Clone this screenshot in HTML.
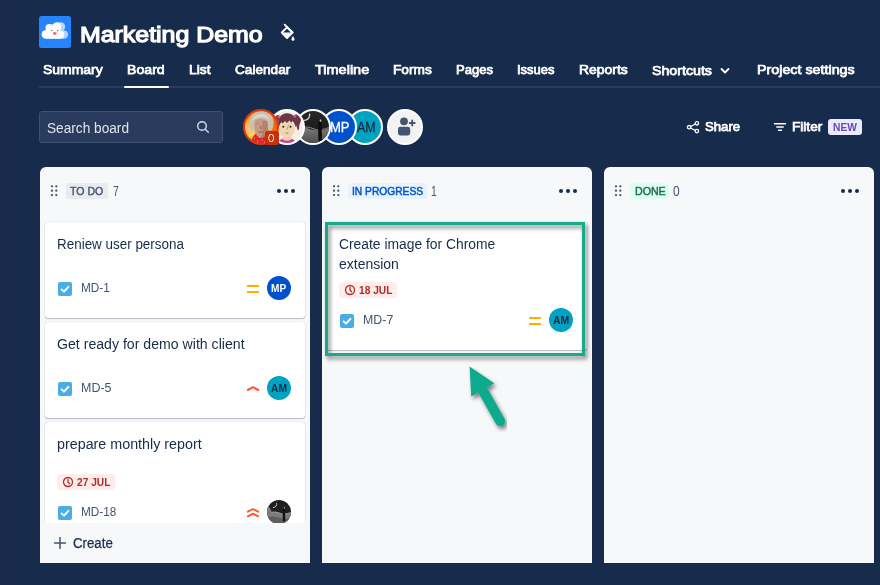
<!DOCTYPE html>
<html lang="en">
<head>
<meta charset="utf-8">
<title>Marketing Demo - Board</title>
<style>
*{box-sizing:border-box;margin:0;padding:0}
html,body{width:880px;height:585px;overflow:hidden}
body{background:#172b4d;font-family:"Liberation Sans",sans-serif;color:#fff;position:relative}
.abs{position:absolute}
.band{left:0;top:0;width:17px;height:585px;background:#182b4d;border-right:3px solid #17294c}
.logo{left:39px;top:16px;width:32px;height:32px;border-radius:2.500px;background:#2684ff;overflow:hidden}
.title{left:80px;top:19px;height:28px;line-height:28px;font-size:23px;font-weight:700;white-space:nowrap;color:#fff;overflow:hidden}
.tabs{left:39px;top:56px;width:841px;height:32px;border-bottom:2px solid #2b3b5c}
.tab{position:absolute;top:62px;height:18px;line-height:18px;font-size:14px;font-weight:700;white-space:nowrap;color:#fff}
.tabline{left:124px;top:86px;width:45px;height:2px;background:#fff;border-radius:1px}
.search{left:39px;top:111px;width:184px;height:32px;border:1px solid #40516f;border-radius:3px;background:#2a3c5e}
.search span{position:absolute;left:7px;top:6px;font-size:14px;line-height:18px;color:#d5dbe6}
.av{position:absolute;border-radius:50%;border:2px solid #fff;overflow:hidden}
.col{position:absolute;top:167px;width:270px;height:396px;background:#f7f8f9;border-radius:6px 6px 0 0}
.lbl{position:absolute;top:183px;height:16px;line-height:16px;font-size:11px;font-weight:700;border-radius:3px;padding:0 4px;white-space:nowrap}
.cnt{position:absolute;top:182px;font-size:14px;line-height:18px;color:#44546f}
.card{position:absolute;background:#fff;border-radius:3px;box-shadow:0 1px 1px rgba(9,30,66,.25),0 0 1px rgba(9,30,66,.31)}
.ct{position:absolute;font-size:14px;line-height:20px;color:#172b4d;white-space:nowrap}
.key{position:absolute;font-size:12px;line-height:16px;color:#44546f;white-space:nowrap}
.due{position:absolute;height:16px;border-radius:3px;background:#ffeceb;color:#ae2e24;font-size:11px;font-weight:700;line-height:16px;white-space:nowrap}
.tx{position:absolute;white-space:nowrap;line-height:normal;transform-origin:0 0}
.cav{position:absolute;width:24px;height:24px;border-radius:50%;font-size:10px;font-weight:700;line-height:24px;text-align:center}
</style>
</head>
<body>
<div class="abs band"></div>

<!-- project logo -->
<div class="abs logo">
<svg width="32" height="32" viewBox="0 0 32 32">
<g fill="#b8d6ff" transform="translate(3.900 0)"><circle cx="6.900" cy="18.400" r="4.300"/><circle cx="10.200" cy="11.800" r="3.700"/><circle cx="17.900" cy="10.700" r="4.400"/><circle cx="21" cy="18.600" r="4.100"/><rect x="6.900" y="13" width="14.100" height="9.700"/><circle cx="14" cy="15" r="5"/></g>
<g fill="#fff"><circle cx="6.900" cy="18.400" r="4.300"/><circle cx="10.200" cy="11.800" r="3.700"/><circle cx="17.900" cy="10.700" r="4.400"/><circle cx="21" cy="18.600" r="4.100"/><rect x="6.900" y="13" width="14.100" height="9.700"/><circle cx="14" cy="15" r="5"/></g>
<ellipse cx="12.800" cy="14.600" rx=".8" ry=".7" fill="#5a5a66"/><ellipse cx="18.700" cy="14.600" rx=".8" ry=".7" fill="#5a5a66"/>
<path d="M13.900 16.500q1.900-.6 3.800 0a1.900 2.300 0 0 1-3.800 0z" fill="#ff4d55"/>
</svg>
</div>
<svg class="abs" style="left:272px;top:16px" width="32" height="32" viewBox="272 16 32 32">
<path d="M284.700 24.700 292.500 32.500" stroke="#fff" stroke-width="1.900" stroke-linecap="round" fill="none"/>
<path d="M287 27.300 281.800 32.500 287 38 292.500 32.500z" stroke="#fff" stroke-width="1.900" stroke-linejoin="round" fill="none"/>
<path d="M281.800 32.500H292.500L287 38z" fill="#fff"/>
<path d="M293 35.900c1.200 1.700 1.500 2.600 1.500 3.400a1.500 1.500 0 0 1-3 0c0-.8.300-1.700 1.500-3.400z" fill="#fff"/>
</svg>

<!-- tabs -->
<div class="abs tabs"></div>
<svg class="abs" style="left:719px;top:65px" width="12" height="12" viewBox="0 0 12 12"><path d="M2.500 4 6 7.500 9.500 4" fill="none" stroke="#fff" stroke-width="1.800" stroke-linecap="round" stroke-linejoin="round"/></svg>
<div class="abs tabline"></div>

<!-- search -->
<div class="abs search">
<svg class="abs" style="left:155px;top:7.400px" width="16" height="16" viewBox="0 0 16 16"><circle cx="7" cy="7" r="4.300" fill="none" stroke="#d5dbe6" stroke-width="1.400"/><path d="M10.200 10.200 13.300 13.300" stroke="#d5dbe6" stroke-width="1.400" stroke-linecap="round"/></svg>
</div>

<!-- avatars -->

<!-- avatars (stacked, first on top) -->
<div class="av" style="left:347px;top:109px;width:36px;height:36px;background:#00a3bf"></div>
<div class="tx" id="bigam" style="left:356.93px;top:118.75px;font-size:14px;font-weight:400;color:#172b4d;transform:scaleX(0.8916);-webkit-text-stroke:0.3px #172b4d">AM</div>
<div class="av" style="left:321px;top:109px;width:36px;height:36px;background:#0052cc"></div>
<div class="tx" id="bigmp" style="left:330.21px;top:118.75px;font-size:14px;font-weight:400;color:#fff;transform:scaleX(0.9318);-webkit-text-stroke:0.3px #fff">MP</div>
<svg class="abs" style="left:295px;top:109px" width="36" height="36" viewBox="0 0 36 36">
<defs><clipPath id="c3"><circle cx="18" cy="18" r="16"/></clipPath>
<linearGradient id="g3" x1="0" y1="0" x2="0" y2="1"><stop offset="0" stop-color="#2b2b2b"/><stop offset=".5" stop-color="#1c1c1c"/><stop offset="1" stop-color="#333"/></linearGradient>
<linearGradient id="g3b" x1="0" y1="0" x2="0" y2="1"><stop offset="0" stop-color="#7c7c7c"/><stop offset="1" stop-color="#454545"/></linearGradient></defs>
<circle cx="18" cy="18" r="18" fill="#fff"/>
<g clip-path="url(#c3)">
<rect width="36" height="36" fill="url(#g3)"/>
<path d="M0 19c4-1.500 8-1.500 12 0s8 2.800 12 2.500 8-1.500 12-3v18H0z" fill="url(#g3b)"/>
<path d="M9 18.200c3-.6 6 .2 9 1.400s6 1.700 8 1.400" fill="none" stroke="#9a9a9a" stroke-width=".9"/>
<path d="M27 20.500c3-.6 5-1.400 8-2.600" fill="none" stroke="#8c8c8c" stroke-width=".8"/>
<path d="M14.600 5.200c.6 3-1.600 5.600-5 6.200" fill="none" stroke="#d0d0d0" stroke-width="1.400" stroke-linecap="round"/>
<path d="M23.600 11c1.200-1.200 3-.8 3.200 1 .3 3-.4 6-.2 9s.6 7 .2 11h-3.400c.2-4-.4-8-.2-11s-.2-7 .4-10z" fill="#0c0c0c"/>
<ellipse cx="25.500" cy="11.600" rx=".9" ry="1.300" fill="#bdbdbd"/>
</g></svg>
<svg class="abs" style="left:269px;top:109px" width="36" height="36" viewBox="0 0 36 36">
<defs><clipPath id="c2"><circle cx="18" cy="18" r="16"/></clipPath></defs>
<circle cx="18" cy="18" r="18" fill="#fff"/>
<g clip-path="url(#c2)">
<rect width="36" height="36" fill="#f3eee6"/>
<path d="M25.500 6c3-2 6.500 0 6.500 4 0 3-1.500 4.500-1.800 7-.3 2 .3 3.500-1.200 4.500-1-2-1.500-5-3-7.500z" fill="#6e3547"/>
<path d="M10.500 6.500c-2-1.500-4.500 0-4 2.800.3 1.500 1.500 2.500 3 2.700z" fill="#6e3547"/>
<path d="M8.500 36c.5-4.500 4-7 9.500-7s9 2.500 9.500 7z" fill="#c8409a"/>
<path d="M13.700 26h8.600v4.500q-4.300 2.500-8.600 0z" fill="#ecd0aa"/>
<ellipse cx="18" cy="19.800" rx="7.800" ry="9" fill="#f0d5b0"/>
<path d="M9.800 19c-2.500-8 1.500-14.800 8.200-14.800s11 5.500 8.500 14.300c-.5-3-1.500-5-3-6.500l-1.500 1.800-1.500-2.300-2.500 2.500-2-2-2.500 2.500-1-1.500c-1.500 1.500-2.300 3.500-2.700 6z" fill="#6e3547"/>
<ellipse cx="9.500" cy="7.700" rx="1.200" ry="1.600" fill="#e040b0"/><ellipse cx="26" cy="7.600" rx="1.100" ry="1.500" fill="#e040b0"/>
<circle cx="14.300" cy="17.700" r="1" fill="#2e2a2a"/><circle cx="21.500" cy="17.700" r="1" fill="#2e2a2a"/>
<path d="M19.900 15.800c-.8 1.500-1.500 3-1.700 4.400h1" fill="none" stroke="#a8705a" stroke-width=".5"/>
<path d="M16.100 23.300q1.900.7 3.800 0-.6 1.600-1.900 1.600t-1.900-1.600z" fill="#c47d80"/>
</g></svg>
<svg class="abs" style="left:243px;top:109px" width="36" height="36" viewBox="0 0 36 36">
<defs><clipPath id="c1"><circle cx="18" cy="18" r="16"/></clipPath>
<radialGradient id="g1" cx=".25" cy=".55" r=".85"><stop offset="0" stop-color="#ffd9a0"/><stop offset=".35" stop-color="#ff9a1f"/><stop offset=".8" stop-color="#f2600f"/><stop offset="1" stop-color="#e4480c"/></radialGradient></defs>
<circle cx="18" cy="18" r="18" fill="#d73c0d"/>
<g clip-path="url(#c1)">
<rect width="36" height="36" fill="url(#g1)"/>
<path d="M4 25.500l5-2.500 2 3-4 3z" fill="#f3d35a"/>
<path d="M8 36c.3-6 2.500-10.500 6.500-12l4 3.500 5-3.500c2 .5 3.500 2 4.500 4v8z" fill="#dd2424"/>
<circle cx="11.500" cy="29" r=".6" fill="#f6c9c9"/><circle cx="14.500" cy="32" r=".6" fill="#f6c9c9"/><circle cx="12" cy="33.500" r=".5" fill="#9fb0c8"/><circle cx="19" cy="31" r=".6" fill="#f6c9c9"/><circle cx="16.500" cy="28.500" r=".5" fill="#f6c9c9"/><circle cx="21.500" cy="33" r=".5" fill="#f6c9c9"/>
<path d="M7.300 20.500c-3-6-.8-14.500 5.200-17 6-2.500 14.500-1 17 5 1.800 4.500 1.200 9-.5 12-1 1.800-3.500 1.500-4-.5l-12.500-.5c-.7 2.500-4 3.500-5.200 1z" fill="#cdbfae"/>
<path d="M11.600 12c2.300-3.500 10.200-3.500 12.600.5 1 3.500.8 8.500-.5 12-1 2.500-3.200 4.200-5.700 4.200s-4.300-1.700-5.300-4.200c-1.300-3.500-2-9-.9-12.500z" fill="#c89a84"/>
<path d="M19.500 12c2.500-.5 4.200 0 4.700.5 1 3.500.8 8.500-.5 12-1 2.500-3.200 4.200-5.700 4.200 2-3 2.500-7 1.500-10.500z" fill="#b3806a"/>
<path d="M12.600 14.700h4M19.300 14.700h4" stroke="#8c96aa" stroke-width="1.300"/>
<path d="M17.500 17l.8 3.200" stroke="#8a5a48" stroke-width=".9"/>
<path d="M15.300 23h5" stroke="#8a5245" stroke-width=".9"/>
<path d="M8.500 12.500c1.500-5.500 6.500-8 11-7.500 3.500.5 6.500 3 7 6.500-3-3-6-3.800-9.500-3.300-3.500.5-6.500 2-8.500 4.300z" fill="#ddd3c7"/>
</g></svg>
<div class="abs" style="left:265px;top:131px;width:14px;height:14px;border-radius:2.500px;background:#c9300a"></div>
<!-- add people -->
<div class="abs" style="left:387px;top:109px;width:36px;height:36px;border-radius:50%;border:2px solid #fff;background:#f1f2f4">
<svg class="abs" style="left:4px;top:2px" width="24" height="24" viewBox="0 0 24 24">
<circle cx="11" cy="8.300" r="3.900" fill="#44546f"/>
<rect x="5" y="13.800" width="12.200" height="8.700" rx="2.400" fill="#44546f"/>
<path d="M19.200 7.500v5M16.700 10h5" stroke="#44546f" stroke-width="1.800" stroke-linecap="round"/>
</svg></div>


<!-- share / filter -->

<svg class="abs" style="left:685px;top:119px" width="16" height="16" viewBox="0 0 16 16">
<path d="M11.700 4.200 4.300 8.200 11.700 12.200" fill="none" stroke="#fff" stroke-width="1.300"/>
<circle cx="11.900" cy="4.300" r="1.700" fill="#172b4d" stroke="#fff" stroke-width="1.300"/>
<circle cx="4.100" cy="8.200" r="1.700" fill="#172b4d" stroke="#fff" stroke-width="1.300"/>
<circle cx="11.900" cy="12.100" r="1.700" fill="#172b4d" stroke="#fff" stroke-width="1.300"/>
</svg>
<svg class="abs" style="left:772px;top:119px" width="16" height="16" viewBox="0 0 16 16">
<path d="M2.500 4.800h11M4.800 8h6.400M6.600 11.200h2.800" stroke="#fff" stroke-width="1.500" stroke-linecap="round"/>
</svg>
<div class="abs" style="left:828px;top:119px;width:34px;height:16px;border-radius:3px;background:#ece8ff;color:#5e4db2;font-size:11px;font-weight:700;line-height:16px;text-align:center"></div>


<!-- columns -->
<div class="col" style="left:40px"></div>
<div class="col" style="left:322px"></div>
<div class="col" style="left:604px"></div>

<svg class="abs" style="left:50px;top:185px" width="8" height="12" viewBox="0 0 8 12"><circle cx="2" cy="1.3" r="1.150" fill="#44546f"/><circle cx="2" cy="5.7" r="1.150" fill="#44546f"/><circle cx="2" cy="10.1" r="1.150" fill="#44546f"/><circle cx="6.3" cy="1.3" r="1.150" fill="#44546f"/><circle cx="6.3" cy="5.7" r="1.150" fill="#44546f"/><circle cx="6.3" cy="10.1" r="1.150" fill="#44546f"/></svg>
<div class="lbl" style="left:66px;width:42px;background:#e9ebee"></div>
<svg class="abs" style="left:276px;top:188px" width="20" height="6" viewBox="0 0 20 6"><circle cx="3" cy="3" r="2" fill="#172b4d"/><circle cx="10" cy="3" r="2" fill="#172b4d"/><circle cx="17" cy="3" r="2" fill="#172b4d"/></svg>
<svg class="abs" style="left:332px;top:185px" width="8" height="12" viewBox="0 0 8 12"><circle cx="2" cy="1.3" r="1.150" fill="#44546f"/><circle cx="2" cy="5.7" r="1.150" fill="#44546f"/><circle cx="2" cy="10.1" r="1.150" fill="#44546f"/><circle cx="6.3" cy="1.3" r="1.150" fill="#44546f"/><circle cx="6.3" cy="5.7" r="1.150" fill="#44546f"/><circle cx="6.3" cy="10.1" r="1.150" fill="#44546f"/></svg>
<div class="lbl" style="left:348px;width:79px;background:#e9f2ff"></div>
<svg class="abs" style="left:558px;top:188px" width="20" height="6" viewBox="0 0 20 6"><circle cx="3" cy="3" r="2" fill="#172b4d"/><circle cx="10" cy="3" r="2" fill="#172b4d"/><circle cx="17" cy="3" r="2" fill="#172b4d"/></svg>
<svg class="abs" style="left:614px;top:185px" width="8" height="12" viewBox="0 0 8 12"><circle cx="2" cy="1.3" r="1.150" fill="#44546f"/><circle cx="2" cy="5.7" r="1.150" fill="#44546f"/><circle cx="2" cy="10.1" r="1.150" fill="#44546f"/><circle cx="6.3" cy="1.3" r="1.150" fill="#44546f"/><circle cx="6.3" cy="5.7" r="1.150" fill="#44546f"/><circle cx="6.3" cy="10.1" r="1.150" fill="#44546f"/></svg>
<div class="lbl" style="left:630px;width:39px;background:#dcfff1"></div>
<svg class="abs" style="left:840px;top:188px" width="20" height="6" viewBox="0 0 20 6"><circle cx="3" cy="3" r="2" fill="#172b4d"/><circle cx="10" cy="3" r="2" fill="#172b4d"/><circle cx="17" cy="3" r="2" fill="#172b4d"/></svg>
<div class="abs" style="left:40px;top:215px;width:270px;height:308px;overflow:hidden"><div class="abs" style="left:-40px;top:-215px;width:880px;height:585px">
<div class="card" style="left:45px;top:222px;width:260px;height:96px"></div>
<svg class="abs" style="left:58px;top:282px" width="14" height="14" viewBox="0 0 14 14"><rect width="14" height="14" rx="2" fill="#4bade8"/><path d="M3.600 7.300 6 9.700 10.400 4.800" fill="none" stroke="#fff" stroke-width="1.900" stroke-linecap="round" stroke-linejoin="round"/></svg>
<svg class="abs" style="left:247px;top:285px" width="12" height="8" viewBox="0 0 12 8"><rect width="12" height="2" rx=".5" fill="#ffab00"/><rect y="6" width="12" height="2" rx=".5" fill="#ffab00"/></svg>
<div class="cav" style="left:267px;top:276px;background:#0052cc;color:#fff"></div>
<div class="card" style="left:45px;top:322px;width:260px;height:96px"></div>
<svg class="abs" style="left:58px;top:382px" width="14" height="14" viewBox="0 0 14 14"><rect width="14" height="14" rx="2" fill="#4bade8"/><path d="M3.600 7.300 6 9.700 10.400 4.800" fill="none" stroke="#fff" stroke-width="1.900" stroke-linecap="round" stroke-linejoin="round"/></svg>
<svg class="abs" style="left:244px;top:380px" width="18" height="16" viewBox="244 380 18 16"><path d="M247.900 390 253 387.200 258.100 390" fill="none" stroke="#ff5630" stroke-width="2" stroke-linecap="round" stroke-linejoin="round"/></svg>
<div class="cav" style="left:267px;top:376px;background:#00a3bf;color:#172b4d"></div>
<div class="card" style="left:45px;top:422px;width:260px;height:124px"></div>
<div class="due" style="left:57px;top:474px;width:58px;padding-left:20px"><svg class="abs" style="left:5px;top:2px" width="12" height="12" viewBox="0 0 12 12"><circle cx="6" cy="6" r="4.500" fill="none" stroke="#ae2e24" stroke-width="1.300"/><path d="M6 3.400V6l1.700 1.700" fill="none" stroke="#ae2e24" stroke-width="1.300" stroke-linecap="round"/></svg></div>
<svg class="abs" style="left:58px;top:506px" width="14" height="14" viewBox="0 0 14 14"><rect width="14" height="14" rx="2" fill="#4bade8"/><path d="M3.600 7.300 6 9.700 10.400 4.800" fill="none" stroke="#fff" stroke-width="1.900" stroke-linecap="round" stroke-linejoin="round"/></svg>
<svg class="abs" style="left:244px;top:502px" width="18" height="20" viewBox="244 502 18 20"><path d="M247.900 511.700 253 509 258.100 511.700M247.900 516.300 253 513.600 258.100 516.300" fill="none" stroke="#ff5630" stroke-width="1.900" stroke-linecap="round" stroke-linejoin="round"/></svg>
<svg class="abs" style="left:267px;top:500px" width="24" height="24" viewBox="0 0 36 36">
<defs><clipPath id="c4"><circle cx="18" cy="18" r="18"/></clipPath></defs>
<g clip-path="url(#c4)">
<rect width="36" height="36" fill="#1f1f1f"/>
<path d="M0 8c4 2 6 6 7 10 4-1 9 0 13 1.500s8 1.500 16-1v18H0z" fill="#7d7d7d"/>
<path d="M0 26c8-2 14-1 20 1s10 1 16 0v9H0z" fill="#5e5e5e"/>
<path d="M7 18.500c4-1 9 0 13 1.500s8 1.500 16-1" fill="none" stroke="#a9a9a9" stroke-width="1"/>
<path d="M14.600 5.200c.6 3-1.600 5.600-5 6.200" fill="none" stroke="#c4c4c4" stroke-width="1.500" stroke-linecap="round"/>
<path d="M24 11c1.200-1.200 3-.8 3.200 1 .3 3-.4 6-.2 9s.6 7 .2 11h-3.400c.2-4-.4-8-.2-11s-.2-7 .4-10z" fill="#111"/>
<ellipse cx="26" cy="11.800" rx="1" ry="1.400" fill="#b5b5b5"/>
</g></svg>
<div class="tx" id="k1" style="left:57.04px;top:235.75px;font-size:14px;font-weight:400;color:#172b4d;transform:scaleX(0.9596)">Reniew user persona</div>
<div class="tx" id="md1" style="left:80.90px;top:280.90px;font-size:12px;font-weight:400;color:#44546f;transform:scaleX(0.9812)">MD-1</div>
<div class="tx" id="mp1" style="left:271.20px;top:283.20px;font-size:10px;font-weight:700;color:#fff;transform:scaleX(1.0111)">MP</div>
<div class="tx" id="k5" style="left:57.20px;top:335.75px;font-size:14px;font-weight:400;color:#172b4d;transform:scaleX(1.0087)">Get ready for demo with client</div>
<div class="tx" id="md5" style="left:80.90px;top:380.90px;font-size:12px;font-weight:400;color:#44546f;transform:scaleX(1.0385)">MD-5</div>
<div class="tx" id="am1" style="left:271.00px;top:383.20px;font-size:10px;font-weight:700;color:#172b4d;transform:scaleX(1.0249)">AM</div>
<div class="tx" id="k18" style="left:57.20px;top:435.75px;font-size:14px;font-weight:400;color:#172b4d;transform:scaleX(1.0216)">prepare monthly report</div>
<div class="tx" id="d27" style="left:77.25px;top:475.60px;font-size:11px;font-weight:700;color:#ae2e24;transform:scaleX(0.9256)">27 JUL</div>
<div class="tx" id="md18" style="left:80.90px;top:504.60px;font-size:12px;font-weight:400;color:#44546f;transform:scaleX(0.9799)">MD-18</div>
</div></div>
<svg class="abs" style="left:54px;top:537px" width="12" height="12" viewBox="0 0 12 12"><path d="M6 .5v11M.5 6h11" stroke="#44546f" stroke-width="1.500" stroke-linecap="round"/></svg>
<div class="card" style="left:327px;top:222px;width:260px;height:128px"></div>
<div class="due" style="left:339px;top:282px;width:58px;padding-left:20px"><svg class="abs" style="left:5px;top:2px" width="12" height="12" viewBox="0 0 12 12"><circle cx="6" cy="6" r="4.500" fill="none" stroke="#ae2e24" stroke-width="1.300"/><path d="M6 3.400V6l1.700 1.700" fill="none" stroke="#ae2e24" stroke-width="1.300" stroke-linecap="round"/></svg></div>
<svg class="abs" style="left:340px;top:314px" width="14" height="14" viewBox="0 0 14 14"><rect width="14" height="14" rx="2" fill="#4bade8"/><path d="M3.600 7.300 6 9.700 10.400 4.800" fill="none" stroke="#fff" stroke-width="1.900" stroke-linecap="round" stroke-linejoin="round"/></svg>
<svg class="abs" style="left:529px;top:317px" width="12" height="8" viewBox="0 0 12 8"><rect width="12" height="2" rx=".5" fill="#ffab00"/><rect y="6" width="12" height="2" rx=".5" fill="#ffab00"/></svg>
<div class="cav" style="left:549px;top:308px;background:#00a3bf;color:#172b4d"></div>
<svg class="abs" style="left:310px;top:210px" width="300" height="240" viewBox="310 210 300 240">
<defs><filter id="sh" x="-20%" y="-20%" width="140%" height="140%"><feGaussianBlur in="SourceAlpha" stdDeviation="2.100"/><feOffset dx="1.500" dy="2.500"/><feComponentTransfer><feFuncA type="linear" slope=".5"/></feComponentTransfer><feMerge><feMergeNode/><feMergeNode in="SourceGraphic"/></feMerge></filter></defs>
<rect x="326.500" y="223.500" width="257" height="131" fill="none" stroke="#12a98b" stroke-width="3" filter="url(#sh)"/>
<g filter="url(#sh)"><path d="M500.200 421.200 482.500 389.700" stroke="#0bab8c" stroke-width="10" stroke-linecap="round" fill="none"/>
<path d="M469.600 366.600 494.300 383.300 471.200 396.400z" fill="#0bab8c"/></g>
</svg>
<div class="tx" id="title" style="left:79.98px;top:21.50px;font-size:22px;font-weight:400;color:#fff;transform:scaleX(1.1313);-webkit-text-stroke:1.25px #fff">Marketing Demo</div>
<div class="tx" id="t1" style="left:43.39px;top:62.30px;font-size:13.5px;font-weight:400;color:#fff;transform:scaleX(1.0339);-webkit-text-stroke:0.75px #fff">Summary</div>
<div class="tx" id="t2" style="left:127.45px;top:62.30px;font-size:13.5px;font-weight:400;color:#fff;transform:scaleX(1.0463);-webkit-text-stroke:0.75px #fff">Board</div>
<div class="tx" id="t3" style="left:188.76px;top:62.30px;font-size:13.5px;font-weight:400;color:#fff;transform:scaleX(1.0235);-webkit-text-stroke:0.75px #fff">List</div>
<div class="tx" id="t4" style="left:234.88px;top:62.30px;font-size:13.5px;font-weight:400;color:#fff;transform:scaleX(1.0082);-webkit-text-stroke:0.75px #fff">Calendar</div>
<div class="tx" id="t5" style="left:315.40px;top:62.30px;font-size:13.5px;font-weight:400;color:#fff;transform:scaleX(1.0738);-webkit-text-stroke:0.75px #fff">Timeline</div>
<div class="tx" id="t6" style="left:393.12px;top:62.30px;font-size:13.5px;font-weight:400;color:#fff;transform:scaleX(1.0132);-webkit-text-stroke:0.75px #fff">Forms</div>
<div class="tx" id="t7" style="left:455.90px;top:62.30px;font-size:13.5px;font-weight:400;color:#fff;transform:scaleX(0.9666);-webkit-text-stroke:0.75px #fff">Pages</div>
<div class="tx" id="t8" style="left:516.90px;top:62.30px;font-size:13.5px;font-weight:400;color:#fff;transform:scaleX(0.9611);-webkit-text-stroke:0.75px #fff">Issues</div>
<div class="tx" id="t9" style="left:578.61px;top:62.30px;font-size:13.5px;font-weight:400;color:#fff;transform:scaleX(1.0313);-webkit-text-stroke:0.75px #fff">Reports</div>
<div class="tx" id="t10" style="left:652.39px;top:63.30px;font-size:13.5px;font-weight:400;color:#fff;transform:scaleX(1.0513);-webkit-text-stroke:0.75px #fff">Shortcuts</div>
<div class="tx" id="t11" style="left:756.64px;top:62.30px;font-size:13.5px;font-weight:400;color:#fff;transform:scaleX(1.0586);-webkit-text-stroke:0.75px #fff">Project settings</div>
<div class="tx" id="srch" style="left:47.00px;top:120.00px;font-size:14px;font-weight:400;color:#dfe3ea;transform:scaleX(0.9758)">Search board</div>
<div class="tx" id="share" style="left:705.17px;top:119.40px;font-size:13.5px;font-weight:400;color:#fff;transform:scaleX(0.9761);-webkit-text-stroke:0.75px #fff">Share</div>
<div class="tx" id="filter" style="left:792.37px;top:119.40px;font-size:13.5px;font-weight:400;color:#fff;transform:scaleX(1.0081);-webkit-text-stroke:0.75px #fff">Filter</div>
<div class="tx" id="new" style="left:832.80px;top:121.00px;font-size:11px;font-weight:700;color:#5e4db2;transform:scaleX(0.9322)">NEW</div>
<div class="tx" id="l1" style="left:70.19px;top:184.60px;font-size:11px;font-weight:400;color:#44546f;transform:scaleX(0.9584);-webkit-text-stroke:0.4px #44546f">TO DO</div>
<div class="tx" id="c1" style="left:113.00px;top:182.60px;font-size:14px;font-weight:400;color:#44546f;transform:scaleX(0.7500)">7</div>
<div class="tx" id="l2" style="left:351.60px;top:184.60px;font-size:11px;font-weight:400;color:#0055cc;transform:scaleX(0.9303);-webkit-text-stroke:0.5px #0055cc">IN PROGRESS</div>
<div class="tx" id="c2" style="left:431.06px;top:182.60px;font-size:14px;font-weight:400;color:#44546f;transform:scaleX(0.7429)">1</div>
<div class="tx" id="l3" style="left:634.64px;top:184.60px;font-size:11px;font-weight:400;color:#216e4e;transform:scaleX(0.9658);-webkit-text-stroke:0.5px #216e4e">DONE</div>
<div class="tx" id="c3" style="left:673.10px;top:182.60px;font-size:14px;font-weight:400;color:#44546f;transform:scaleX(0.8625)">0</div>
<div class="tx" id="create" style="left:72.62px;top:534.75px;font-size:14px;font-weight:400;color:#172b4d;transform:scaleX(0.9474);-webkit-text-stroke:0.25px #172b4d">Create</div>
<div class="tx" id="k7" style="left:338.80px;top:235.75px;font-size:14px;font-weight:400;color:#172b4d;transform:scaleX(0.9888)">Create image for Chrome</div>
<div class="tx" id="k7b" style="left:338.90px;top:255.75px;font-size:14px;font-weight:400;color:#172b4d;transform:scaleX(0.9992)">extension</div>
<div class="tx" id="d18" style="left:359.30px;top:283.60px;font-size:11px;font-weight:700;color:#ae2e24;transform:scaleX(0.9270)">18 JUL</div>
<div class="tx" id="md7" style="left:362.90px;top:312.80px;font-size:12px;font-weight:400;color:#44546f;transform:scaleX(1.0318)">MD-7</div>
<div class="tx" id="am2" style="left:553.30px;top:315.20px;font-size:10px;font-weight:700;color:#172b4d;transform:scaleX(1.0446)">AM</div>
<div class="tx" id="obadge" style="left:268.40px;top:132.90px;font-size:10px;font-weight:400;color:#fff;transform:scaleX(0.8125)">O</div>
</body>
</html>
